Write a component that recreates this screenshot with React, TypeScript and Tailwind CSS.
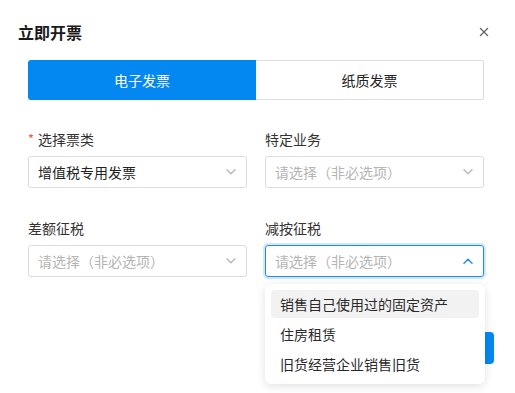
const font = { fontFamily: '"Noto Sans CJK SC", "Noto Sans", sans-serif' }

function Chevron({ up = false, color = '#b8b8b8' }: { up?: boolean; color?: string }) {
  return (
    <svg width="10" height="6" viewBox="0 0 10 6" fill="none" className="shrink-0">
      <path
        d={up ? 'M1 5.2 L5 1.2 L9 5.2' : 'M1 0.8 L5 4.8 L9 0.8'}
        stroke={color}
        strokeWidth="1.4"
        strokeLinecap="round"
        strokeLinejoin="round"
      />
    </svg>
  )
}

function Select({ value, placeholder, focused = false }: { value?: string; placeholder?: string; focused?: boolean }) {
  return (
    <div
      className={
        focused
          ? 'h-8 flex items-center justify-between rounded-[3px] border border-[#1a8cf5] ring-2 ring-[#d3e8fc] pl-[9px] pr-[10px]'
          : 'h-8 flex items-center justify-between rounded-[3px] border border-[#dcdcdc] pl-[9px] pr-[10px]'
      }
    >
      {value ? (
        <span className="text-[14px] text-[#222]">{value}</span>
      ) : (
        <span className="text-[14px] text-[#b5b5b5]">{placeholder}</span>
      )}
      <Chevron up={focused} color={focused ? '#1a8cf5' : '#b8b8b8'} />
    </div>
  )
}

function Field({ label, required = false, children }: { label: string; required?: boolean; children: React.ReactNode }) {
  return (
    <div className="flex flex-col gap-[6px]">
      <div className="h-[22px] flex items-center text-[14px] text-[#333]">
        {required && <span className="text-[#f5504a] mr-[4px] text-[13px]">*</span>}
        {label}
      </div>
      {children}
    </div>
  )
}

const options = ['销售自己使用过的固定资产', '住房租赁', '旧货经营企业销售旧货']

export default function App() {
  return (
    <div className="relative w-[515px] h-[393px] bg-white overflow-hidden" style={font}>
      {/* header */}
      <div className="flex items-center justify-between pt-5 pl-[18px] pr-[26px]">
        <h1 className="text-[16px] leading-6 font-bold text-[#1a1a1a]">立即开票</h1>
        <svg width="10" height="10" viewBox="0 0 10 10">
          <path d="M1 1 L9 9 M9 1 L1 9" stroke="#666" strokeWidth="1.3" />
        </svg>
      </div>

      <div className="pl-[28px] pr-[31px]">
        {/* tabs */}
        <div className="mt-4 grid grid-cols-2 h-10 text-[14px]">
          <div className="flex items-center justify-center rounded-l-[3px] bg-[#0388f2] text-white">电子发票</div>
          <div className="flex items-center justify-center rounded-r-[3px] border border-l-0 border-[#dcdcdc] text-[#222]">
            纸质发票
          </div>
        </div>

        {/* form */}
        <div className="mt-7 grid grid-cols-2 gap-x-[18px] gap-y-[29px]">
          <Field label="选择票类" required>
            <Select value="增值税专用发票" />
          </Field>
          <Field label="特定业务">
            <Select placeholder="请选择（非必选项）" />
          </Field>
          <Field label="差额征税">
            <Select placeholder="请选择（非必选项）" />
          </Field>
          <Field label="减按征税">
            <Select placeholder="请选择（非必选项）" focused />
          </Field>
        </div>
      </div>

      {/* footer button, mostly covered by the menu */}
      <button className="absolute left-[404px] top-[332px] w-[90px] h-8 rounded-[4px] bg-[#0388f2] text-white text-[14px]">
        确定
      </button>

      {/* dropdown menu */}
      <div className="absolute left-[265px] top-[284px] w-[220px] p-[6px] flex flex-col gap-[2px] rounded-[6px] bg-white shadow-[0_2px_10px_rgba(0,0,0,0.12)]">
        {options.map((o, i) => (
          <div
            key={o}
            className={
              i === 0
                ? 'h-7 flex items-center pl-[9px] rounded-[4px] bg-[#f2f2f2] text-[14px] text-[#2a2a2a]'
                : 'h-7 flex items-center pl-[9px] rounded-[4px] text-[14px] text-[#2a2a2a]'
            }
          >
            {o}
          </div>
        ))}
      </div>
    </div>
  )
}
